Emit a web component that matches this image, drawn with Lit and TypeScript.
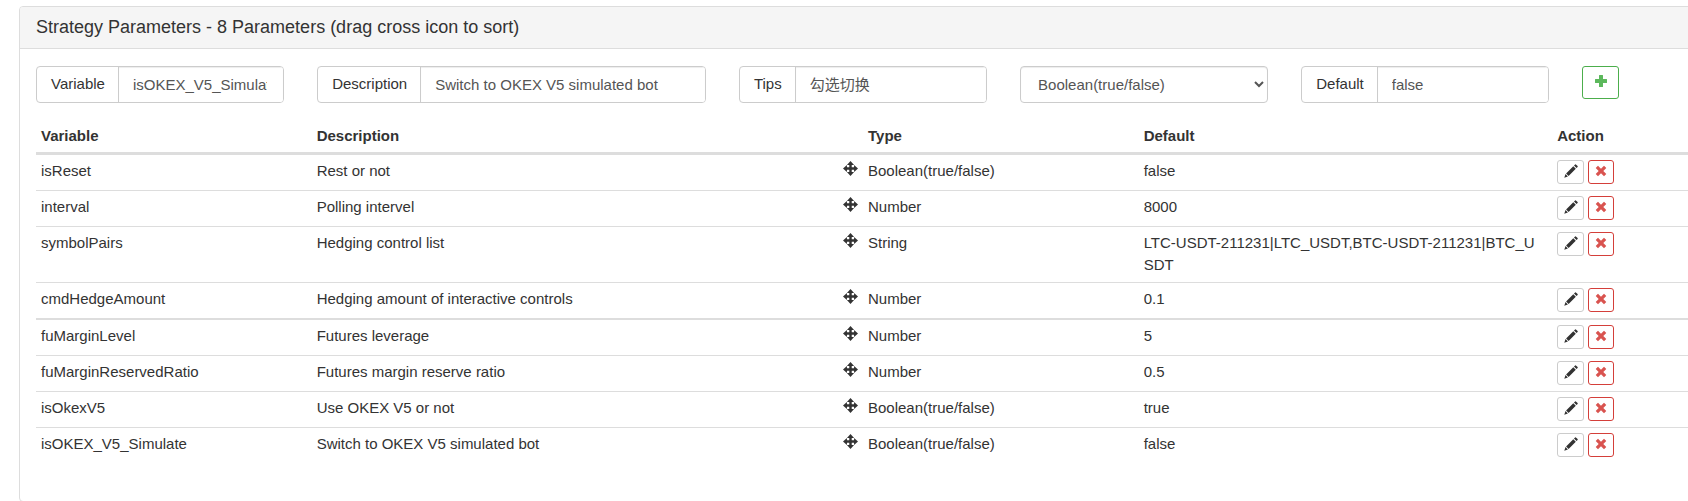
import { LitElement, html, svg, css } from "lit";
import { customElement, state } from "lit/decorators.js";
import { classMap } from "lit/directives/class-map.js";

interface Param {
  name: string;
  description: string;
  type: string;
  value: string;
  heavy?: boolean;
}

const TYPES = ["Number", "Boolean(true/false)", "String", "Selected"];

const PLUS = svg`<path d="M5.500 1h3q.5 0 .5.5V5h3.500q.5 0 .5.5v3q0 .5-.5.5H9v3.500q0 .5-.5.5h-3q-.5 0-.5-.5V9H1.500q-.5 0-.5-.5v-3q0-.5.5-.5H5V1.500q0-.5.5-.5z"/>`;
const CROSS = svg`<path d="M3.800 1.100 7 4.300l3.200-3.200q.3-.3.6 0l2.100 2.100q.3.300 0 .6L9.700 7l3.200 3.200q.3.300 0 .6l-2.100 2.100q-.3.300-.6 0L7 9.700l-3.200 3.200q-.3.300-.6 0l-2.100-2.100q-.3-.3 0-.6L4.300 7 1.100 3.800q-.3-.3 0-.6l2.100-2.100q.3-.3.6 0z"/>`;
const PENCIL = svg`<path d="M11.100.4q.4-.4.800 0l1.700 1.700q.4.400 0 .8l-1.100 1.100-2.500-2.500zM9.300 2.200l2.500 2.500-7.200 7.200-2.500-2.500zM1.500 10.100l2.400 2.400L.3 13.700z"/>`;
const MOVE = svg`<path d="M8 0l3.800 4.200H9.300v2.500h2.500V4.200L16 8l-4.200 3.800V9.300H9.300v2.500h2.500L8 16l-3.800-4.200h2.500V9.300H4.200v2.500L0 8l4.200-3.800v2.500h2.500V4.200H4.200z"/>`;

@customElement("app-root")
export class AppRoot extends LitElement {
  @state() private params: Param[] = [
    { name: "isReset", description: "Rest or not", type: "Boolean(true/false)", value: "false" },
    { name: "interval", description: "Polling intervel", type: "Number", value: "8000" },
    { name: "symbolPairs", description: "Hedging control list", type: "String", value: "LTC-USDT-211231|LTC_USDT,BTC-USDT-211231|BTC_USDT" },
    { name: "cmdHedgeAmount", description: "Hedging amount of interactive controls", type: "Number", value: "0.1", heavy: true },
    { name: "fuMarginLevel", description: "Futures leverage", type: "Number", value: "5" },
    { name: "fuMarginReservedRatio", description: "Futures margin reserve ratio", type: "Number", value: "0.5" },
    { name: "isOkexV5", description: "Use OKEX V5 or not", type: "Boolean(true/false)", value: "true" },
    { name: "isOKEX_V5_Simulate", description: "Switch to OKEX V5 simulated bot", type: "Boolean(true/false)", value: "false" },
  ];

  static styles = css`
    :host {
      display: block;
      box-sizing: border-box;
      height: 100vh;
      overflow: hidden;
      padding: 6px 0 0 19px;
      background: #fff;
      color: #333;
      font: 15px/22px "Liberation Sans", Arial, "Noto Sans CJK SC", sans-serif;
    }
    * { box-sizing: border-box; }
    .panel {
      margin-right: -19px;
      border: 1px solid #ddd;
      border-radius: 4px;
    }
    .heading {
      margin: 0;
      padding: 10px 16px 11px;
      border-bottom: 1px solid #ddd;
      border-radius: 3px 3px 0 0;
      background: #f5f5f5;
      font-size: 18px;
      line-height: 20px;
      font-weight: 400;
    }
    .body { padding: 17px 16px 38px; }
    .form {
      display: grid;
      grid-template-columns: 2fr 3fr 2fr 2fr 2fr 1fr;
      margin: 0 -17px 17px -16px;
    }
    .col { padding: 0 17px 0 16px; min-width: 0; }
    .group {
      display: flex;
      height: 37px;
      border: 1px solid #ccc;
      border-radius: 4px;
      overflow: hidden;
    }
    .group label {
      flex: none;
      padding: 6px 13px 6px 14px;
      border-right: 1px solid #ccc;
    }
    .group input {
      flex: 1;
      min-width: 0;
      padding: 6px 16px 6px 14px;
      border: 0;
      outline: 0;
      background: #fff;
      color: #555;
      font: inherit;
      box-shadow: inset 0 1px 1px rgba(0, 0, 0, 0.075);
    }
    .select {
      display: block;
      width: 100%;
      height: 37px;
      padding: 6px 13px;
      border: 1px solid #ccc;
      border-radius: 4px;
      background: #fff;
      color: #555;
      font: inherit;
      box-shadow: inset 0 1px 1px rgba(0, 0, 0, 0.075);
    }
    button {
      display: inline-flex;
      align-items: center;
      justify-content: center;
      padding: 0;
      border: 1px solid #ccc;
      border-radius: 3px;
      background: #fff;
      color: #333;
      cursor: pointer;
    }
    svg { display: block; fill: currentColor; }
    .add {
      width: 37px;
      height: 33px;
      padding-bottom: 3px;
      border-color: #4cae4c;
      color: #5cb85c;
    }
    .params {
      width: 100%;
      table-layout: fixed;
      border-collapse: separate;
      border-spacing: 0;
    }
    .two { width: 16.6667%; }
    .three { width: 25%; }
    .four { width: 33.3333%; }
    .one { width: 8.3333%; }
    th {
      padding: 5px;
      border-bottom: 3px solid #ddd;
      text-align: left;
      font-weight: 700;
    }
    td {
      padding: 5px 5px 6px;
      border-bottom: 1px solid #ddd;
      vertical-align: top;
      word-break: break-all;
    }
    td.value { padding-right: 12px; }
    tr.heavy td { border-bottom-width: 2px; }
    tbody tr:last-child td { border-bottom: 0; }
    .describe { display: flex; justify-content: space-between; }
    .handle { flex: none; padding-top: 1px; cursor: move; }
    .actions { display: flex; gap: 4px; }
    .actions button {
      width: 27px;
      height: 24px;
      padding-bottom: 2px;
    }
    .actions .remove { width: 26px; border-color: #d43f3a; color: #d9534f; }
  `;

  private icon(shape: unknown, size: number, box = 14) {
    return html`<svg width=${size} height=${size} viewBox="0 0 ${box} ${box}" aria-hidden="true">${shape}</svg>`;
  }

  private field(id: string, label: string, value: string) {
    return html`<div class="col">
      <div class="group">
        <label for=${id}>${label}</label>
        <input id=${id} type="text" .value=${value} />
      </div>
    </div>`;
  }

  private remove(p: Param) {
    this.params = this.params.filter((x) => x !== p);
  }

  private row(p: Param) {
    return html`<tr class=${classMap({ heavy: !!p.heavy })}>
      <td>${p.name}</td>
      <td>
        <div class="describe">
          <span>${p.description}</span>
          <span class="handle">${this.icon(MOVE, 15, 16)}</span>
        </div>
      </td>
      <td>${p.type}</td>
      <td class="value">${p.value}</td>
      <td>
        <div class="actions">
          <button type="button" aria-label="Edit">${this.icon(PENCIL, 14)}</button>
          <button type="button" class="remove" aria-label="Remove" @click=${() => this.remove(p)}>${this.icon(CROSS, 12)}</button>
        </div>
      </td>
    </tr>`;
  }

  render() {
    return html`<section class="panel">
      <h3 class="heading">Strategy Parameters - ${this.params.length} Parameters (drag cross icon to sort)</h3>
      <div class="body">
        <form class="form" @submit=${(e: Event) => e.preventDefault()}>
          ${this.field("variable", "Variable", "isOKEX_V5_Simulate")}
          ${this.field("description", "Description", "Switch to OKEX V5 simulated bot")}
          ${this.field("tips", "Tips", "勾选切换")}
          <div class="col">
            <select class="select" aria-label="Type">
              ${TYPES.map((t) => html`<option ?selected=${t === "Boolean(true/false)"}>${t}</option>`)}
            </select>
          </div>
          ${this.field("default", "Default", "false")}
          <div class="col">
            <button type="button" class="add" aria-label="Add">${this.icon(PLUS, 14)}</button>
          </div>
        </form>
        <table class="params">
          <thead>
            <tr>
              <th class="two">Variable</th>
              <th class="four">Description</th>
              <th class="two">Type</th>
              <th class="three">Default</th>
              <th class="one">Action</th>
            </tr>
          </thead>
          <tbody>${this.params.map((p) => this.row(p))}</tbody>
        </table>
      </div>
    </section>`;
  }
}
